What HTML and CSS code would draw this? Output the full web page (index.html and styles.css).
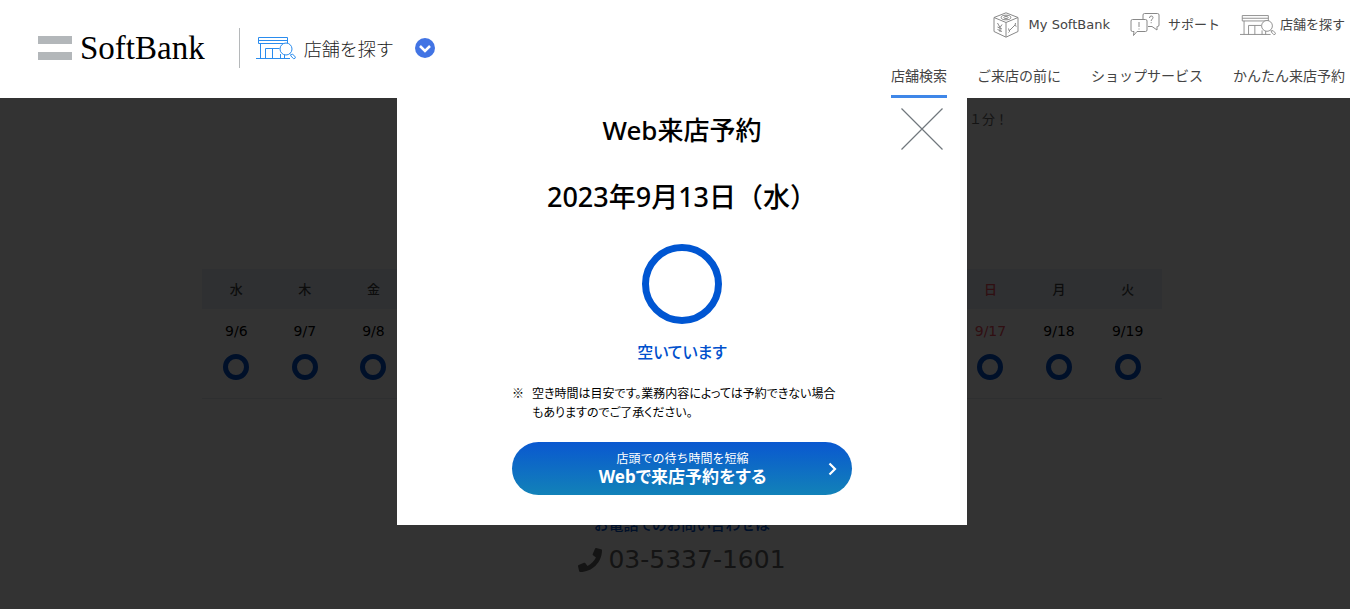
FILE: index.html
```html
<!DOCTYPE html>
<html lang="ja">
<head>
<meta charset="utf-8">
<meta name="viewport" content="width=device-width, initial-scale=1">
<title>Web来店予約 | SoftBank</title>
<link rel="stylesheet" href="styles.css">
</head>
<body>
<svg width="0" height="0" class="defs" aria-hidden="true">
  <symbol id="shop" viewBox="0 0 40 24" fill="none" stroke="currentColor">
    <path d="M2.5 1.5h29v6h-29zM2.5 4.5h29M4.5 7.5v15M28.500 17.500v5M0 22.500h34M9.500 22.500v-10h14M16.500 12.500v10M24.500 18v4.500"/>
    <circle cx="30" cy="13" r="6" fill="#fff"/>
    <path d="M34 17.500l1.500 1.500M34.500 19.500l2-1.500 3 3.200q0 1.500-2 1.500z"/>
  </symbol>
</svg>
<header class="header">
  <div class="brand">
    <a class="logo" href="#"><span class="logo-mark"></span><span class="logo-name">SoftBank</span></a>
    <a class="category" href="#"><svg class="category-icon"><use href="#shop"/></svg>店舗を探す</a>
    <button class="toggle" type="button" aria-label="メニューを開く">
      <svg viewBox="0 0 20 20"><path d="M5 8l5 5 5-5" fill="none" stroke="#fff" stroke-width="2.500"/></svg>
    </button>
  </div>
  <div class="menus">
    <nav class="utility" aria-label="ユーティリティ">
      <a href="#" class="util-my"><svg class="cube" viewBox="0 0 26 26" fill="none" stroke="#888"><path d="M13 .8L25 5.500V19.500L13 25.200 1 19.500V5.500zM1 5.500L13 10.500 25 5.500M13 10.500V25M4.500 11l2.500 4.500 2-3M7 15.500v4.500M4.500 15l4.500 2M4.500 17.500l4.500 2M16 19l6-6M15.500 16.500l1 3-1 1M22.500 11l-.5 2.500 1.500.8"/><ellipse cx="13" cy="5.500" rx="4.800" ry="2.300"/><ellipse cx="13" cy="5.500" rx="2.200" ry="1"/></svg>My SoftBank</a>
      <a href="#" class="util-help"><svg class="bubbles" viewBox="0 0 30 24" fill="none" stroke="#888"><path d="M13 7V2q0-1.500 1.500-1.500h13q1.500 0 1.500 1.500v10q0 1.500-1.500 1.500H27V17l-5-3.500h-4M2.500 6.500h13q1.500 0 1.500 1.500v9q0 1.500-1.500 1.500H7L3.500 22.500 4 18.500H2.500Q1 18.500 1 17V8q0-1.500 1.500-1.500zM9 9v5M9 15.500v1M19.500 5q0-2 1.800-2 1.700 0 1.700 1.600 0 1-1 1.600-.8.600-.8 1.800M21.200 9.200v1"/></svg>サポート</a>
      <a href="#" class="util-shop"><svg class="util-shop-icon"><use href="#shop"/></svg>店舗を探す</a>
    </nav>
    <nav class="tabs" aria-label="店舗メニュー">
      <a class="tab tab-current" href="#">店舗検索</a>
      <a class="tab" href="#">ご来店の前に</a>
      <a class="tab" href="#">ショップサービス</a>
      <a class="tab" href="#">かんたん来店予約</a>
    </nav>
  </div>
</header>
<div class="stage">
  <main class="page">
    <p class="lead">１分！</p>
    <table class="calendar">
      <thead><tr><th>水</th><th>木</th><th>金</th><th>土</th><th class="sun">日</th><th>月</th><th>火</th><th>水</th><th>木</th><th>金</th><th>土</th><th class="sun">日</th><th>月</th><th>火</th></tr></thead>
      <tbody><tr>
        <td>9/6<i class="ring"></i></td><td>9/7<i class="ring"></i></td><td>9/8<i class="ring"></i></td><td>9/9<i class="ring"></i></td><td class="sun">9/10<i class="ring"></i></td><td>9/11<i class="ring"></i></td><td>9/12<i class="ring"></i></td><td>9/13<i class="ring"></i></td><td>9/14<i class="ring"></i></td><td>9/15<i class="ring"></i></td><td>9/16<i class="ring"></i></td><td class="sun">9/17<i class="ring"></i></td><td>9/18<i class="ring"></i></td><td>9/19<i class="ring"></i></td>
      </tr></tbody>
    </table>
    <section class="contact">
      <h2 class="contact-title">お電話でのお問い合わせは</h2>
      <a class="phone" href="tel:03-5337-1601"><svg class="phone-icon" viewBox="0 0 512 512"><path fill="currentColor" d="M493 25L389 1c-11-3-23 3-27 14l-48 112c-4 10-1 21 7 28l61 50c-36 77-99 140-178 178l-50-61c-7-8-18-11-28-7L14 363c-11 4-17 16-14 27l24 104c3 11 12 18 24 18 256 0 464-207 464-464 0-12-7-21-19-23z"/></svg>03-5337-1601</a>
    </section>
  </main>
  <div class="overlay">
    <div class="modal" role="dialog" aria-modal="true" aria-labelledby="modal-title">
      <button class="close" type="button" aria-label="閉じる"><svg viewBox="0 0 42 42"><path d="M.5.500l41 41M41.500.500l-41 41" fill="none" stroke="#70777d" stroke-width="1.200"/></svg></button>
      <h1 class="modal-title" id="modal-title">Web来店予約</h1>
      <p class="modal-date">2023年9月13日（水）</p>
      <div class="status-ring"></div>
      <p class="status">空いています</p>
      <div class="note"><span>※</span><p>空き時間は目安です。業務内容によっては予約できない場合もありますのでご了承ください。</p></div>
      <a class="reserve" href="#">
        <span class="reserve-text"><span class="reserve-sub">店頭での待ち時間を短縮</span><strong>Webで来店予約をする</strong></span>
        <svg class="reserve-arrow" viewBox="0 0 9 14"><path d="M1.500 1.500L7 7l-5.500 5.500" fill="none" stroke="#fff" stroke-width="2.200"/></svg>
      </a>
    </div>
  </div>
</div>
</body>
</html>
```
FILE: styles.css
```css
* { box-sizing: border-box; }
body {
  margin: 0;
  min-height: 100vh;
  display: flex;
  flex-direction: column;
  background: #fff;
  color: #444;
  font-family: "DejaVu Sans", "Noto Sans CJK JP", sans-serif;
  font-size: 13px;
}
p, h1, h2 { margin: 0; }
a { color: inherit; text-decoration: none; }
button { border: 0; padding: 0; background: none; cursor: pointer; }
svg { display: block; flex: none; }
.defs { position: absolute; }

.header {
  display: flex;
  justify-content: space-between;
  height: 98px;
  padding: 0 5px 0 38px;
  background: #fff;
}
.brand { display: flex; align-items: center; padding-bottom: 2px; }
.logo {
  display: flex;
  align-items: center;
  gap: 8px;
  height: 40px;
  padding-right: 34px;
  border-right: 1px solid #b5b8ba;
}
.logo-mark {
  width: 34px;
  height: 24px;
  border: solid #b3b7ba;
  border-width: 8px 0;
}
.logo-name {
  color: #000;
  font-family: "Liberation Serif", serif;
  font-size: 33px;
  line-height: 40px;
}
.category {
  display: flex;
  align-items: center;
  gap: 8px;
  padding-left: 16px;
  color: #222;
  font-family: "Noto Sans CJK JP", sans-serif;
  font-size: 18px;
  font-weight: 300;
  line-height: 24px;
}
.category-icon { width: 40px; height: 24px; color: #2a8cee; }
.toggle {
  width: 20px;
  height: 20px;
  margin-left: 21px;
  border-radius: 50%;
  background: #4274e4;
}
.menus {
  display: flex;
  flex-direction: column;
  align-items: flex-end;
  justify-content: space-between;
}
.utility { display: flex; gap: 20px; height: 50px; }
.utility a { display: flex; align-items: center; line-height: 18px; }
.util-my { gap: 10px; }
.util-help { gap: 8px; }
.util-shop { gap: 4px; }
.cube { width: 26px; height: 26px; }
.bubbles { width: 30px; height: 24px; }
.util-shop-icon { width: 36px; height: 22px; color: #888; }
.tabs { display: flex; gap: 30px; }
.tab {
  height: 42px;
  border-bottom: 3px solid transparent;
  font-family: "Noto Sans CJK JP", sans-serif;
  font-size: 14px;
  line-height: 38px;
}
.tab-current { border-color: #3f87e8; }

.stage { position: relative; flex: 1; padding-left: 14px; }
.page { max-width: 960px; margin: 0 auto; padding: 12px 0 30px; }
.lead { padding-right: 154px; line-height: 20px; text-align: right; color: #666; }
.calendar {
  width: 100%;
  margin-top: 139px;
  border-collapse: collapse;
  table-layout: fixed;
  text-align: center;
}
.calendar th {
  height: 40px;
  padding: 0 0 2px;
  background: #eaf1fb;
  color: #444;
  font-weight: 500;
}
.calendar td {
  height: 89px;
  padding: 12px 0 0;
  border-bottom: 1px solid #e4e8ee;
  color: #000;
  font-size: 14px;
  line-height: 20px;
  vertical-align: top;
}
.calendar .sun { color: #f04a5a; }
.ring {
  display: block;
  width: 26px;
  height: 26px;
  margin: 13px auto 0;
  border: 5px solid #0050cc;
  border-radius: 50%;
}
.contact { margin-top: 114px; text-align: center; }
.contact-title {
  color: #0050cc;
  font-size: 15px;
  font-weight: 500;
  line-height: 24px;
  font-feature-settings: "palt";
}
.phone {
  display: flex;
  align-items: center;
  justify-content: center;
  gap: 6px;
  margin-top: 8px;
  color: #666;
  font-size: 25px;
  line-height: 30px;
}
.phone-icon { width: 24px; height: 24px; }

.overlay {
  position: absolute;
  inset: 0;
  padding-left: 14px;
  background: rgba(0, 0, 0, .8);
}
.modal {
  position: relative;
  width: 570px;
  max-width: 100%;
  margin: 0 auto;
  padding: 12px 115px 30px;
  background: #fff;
  color: #000;
  text-align: center;
}
.close { position: absolute; top: 10px; right: 24px; width: 42px; height: 42px; }
.modal-title, .modal-date {
  font-family: "Noto Sans", "Noto Sans CJK JP", sans-serif;
  font-size: 26px;
  font-weight: 500;
  line-height: 40px;
}
.modal-date { margin-top: 27px; font-size: 27px; }
.status-ring {
  width: 80px;
  height: 80px;
  margin: 27px auto 0;
  border: 7px solid #0056d2;
  border-radius: 50%;
}
.status {
  margin-top: 17px;
  color: #0050cc;
  font-size: 16px;
  font-weight: 500;
  line-height: 24px;
  font-feature-settings: "palt";
}
.note {
  display: flex;
  gap: 8px;
  margin-top: 18px;
  padding-right: 10px;
  text-align: left;
  font-family: "Noto Sans CJK JP", sans-serif;
  font-size: 12px;
  line-height: 19px;
  font-feature-settings: "palt";
}
.reserve {
  display: flex;
  align-items: center;
  height: 53px;
  margin-top: 21px;
  padding: 0 15px;
  border-radius: 27px;
  background: linear-gradient(#0a58d0, #1282b8);
  color: #fff;
}
.reserve-text { flex: 1; display: flex; flex-direction: column; padding-left: 10px; }
.reserve-sub { font-size: 12px; line-height: 16px; }
.reserve strong {
  font-family: "Noto Sans", "Noto Sans CJK JP", sans-serif;
  font-size: 17px;
  line-height: 20px;
  font-feature-settings: "palt";
}
.reserve-arrow { width: 9px; height: 14px; }
```
